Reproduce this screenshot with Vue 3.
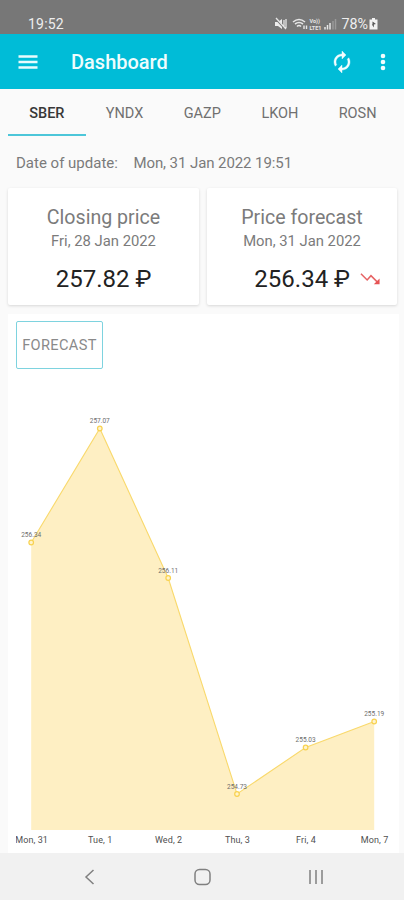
<script setup>
const tabs = ['SBER', 'YNDX', 'GAZP', 'LKOH', 'ROSN']
const points = [
  { x: 23.2, y: 227.5, value: '256.34', day: 'Mon, 31' },
  { x: 91.8, y: 113.5, value: '257.07', day: 'Tue, 1' },
  { x: 160.2, y: 263, value: '256.11', day: 'Wed, 2' },
  { x: 229, y: 479, value: '254.73', day: 'Thu, 3' },
  { x: 297.6, y: 432.5, value: '255.03', day: 'Fri, 4' },
  { x: 366.2, y: 406.5, value: '255.19', day: 'Mon, 7' },
]
const line = points.map((p) => `${p.x},${p.y}`).join(' ')
const area = `23.2,515 ${line} 366.2,515`
</script>

<template>
  <div class="screen">
    <div class="status">
      <span class="time">19:52</span>
      <svg class="sicons" width="66" height="14" viewBox="0 0 66 14" fill="none" stroke="#e6e6e6">
        <path d="M1 5H4L8 2V12L4 9H1Z" fill="#ececec" stroke="none" />
        <path d="M1 1L11 12" stroke="#777" stroke-width="1.8" />
        <path d="M2 1L12 12M10 3V10M12 2V11" stroke-width="1.3" />
        <path d="M19 5Q25 0 31 5M21 7Q25 4 29 7M23 9.5Q25 7.5 27 9.5" stroke-width="1.6" />
        <path d="M30 8.5V12M32.5 8.5V12" stroke-width="1.4" />
        <text x="35.5" y="6" class="lte">Vo))</text>
        <text x="35.5" y="12.8" class="lte">LTE1</text>
        <path d="M51 10V12.5M53.5 8V12.5M56 6V12.5" stroke-width="1.5" />
        <path d="M59 4V12.5M61.5 2V12.5" stroke="#999" stroke-width="1.5" />
      </svg>
      <span class="pct">78%</span>
      <svg class="battery" width="9" height="12" viewBox="0 0 9 12">
        <path d="M3 0H6V1.5H8.5V11.5H.5V1.5H3Z" fill="#f2f2f2" />
        <path d="M3.5 3.5L7 6L4.8 6.5L5 9.5L2.8 6.5H3.5Z" fill="#555" />
      </svg>
    </div>
    <header class="bar">
      <svg class="menu" width="20" height="14" viewBox="0 0 20 14">
        <path d="M.5 1.5H19.5M.5 7H19.5M.5 12.5H19.5" stroke="#e9fbfd" stroke-width="2.5" />
      </svg>
      <h1>Dashboard</h1>
      <svg class="sync" width="24" height="24" viewBox="0 0 24 24" fill="#f2fdfe" stroke="#f2fdfe" stroke-width=".4">
        <path d="M12 6v3l4-4-4-4v3c-4.42 0-8 3.58-8 8 0 1.57.46 3.03 1.24 4.26L6.7 14.8c-.45-.83-.7-1.79-.7-2.8 0-3.31 2.69-6 6-6zm6.76 1.74L17.3 9.2c.44.84.7 1.79.7 2.8 0 3.31-2.69 6-6 6v-3l-4 4 4 4v-3c4.42 0 8-3.58 8-8 0-1.57-.46-3.03-1.24-4.26z" />
      </svg>
      <svg class="more" width="6" height="18" viewBox="0 0 6 18" fill="#f2fdfe">
        <circle cx="3" cy="3" r="2.3" /><circle cx="3" cy="9" r="2.3" /><circle cx="3" cy="15" r="2.3" />
      </svg>
    </header>
    <nav class="tabs">
      <div v-for="(t, i) in tabs" :key="t" class="tab" :class="{ active: i === 0 }">{{ t }}</div>
    </nav>
    <div class="updated"><span>Date of update:</span><span class="stamp">Mon, 31 Jan 2022 19:51</span></div>
    <div class="cards">
      <section class="card">
        <h2>Closing price</h2>
        <p>Fri, 28 Jan 2022</p>
        <div class="price">257.82 ₽</div>
      </section>
      <section class="card">
        <h2>Price forecast</h2>
        <p>Mon, 31 Jan 2022</p>
        <div class="price with-trend">
          256.34 ₽
          <svg class="trend" width="21" height="14" viewBox="0 0 22 14">
            <path d="M1 1.5L7.5 8L11.5 3.5L18 10" fill="none" stroke="#e66364" stroke-width="1.6" />
            <path d="M20.5 6.5V12.5H14.5Z" fill="#e65354" />
          </svg>
        </div>
      </section>
    </div>
    <main class="panel">
      <button class="forecast">FORECAST</button>
      <svg class="chart" width="391" height="539" viewBox="0 -1 391 539">
        <defs><clipPath id="plot"><rect x="8" y="0" width="383" height="538" /></clipPath></defs>
        <polygon :points="area" fill="#feefc3" />
        <polyline :points="line" fill="none" stroke="#f9d96c" stroke-width="1.1" />
        <g clip-path="url(#plot)">
          <template v-for="p in points" :key="p.day">
            <circle :cx="p.x" :cy="p.y" r="2.3" fill="#fff3cd" stroke="#f8d250" stroke-width="1.2" />
            <text :x="p.x" :y="p.y - 5.5" class="value">{{ p.value }}</text>
            <text :x="p.x + 0.4" y="528" class="day">{{ p.day }}</text>
          </template>
        </g>
      </svg>
    </main>
    <footer class="nav">
      <svg width="404" height="47" viewBox="0 0 404 47" fill="none" stroke="#808080" stroke-width="1.5">
        <path d="M93.5 17L86 24L93.5 31" />
        <rect x="195" y="16.5" width="15" height="15" rx="4.5" />
        <path d="M310 17V31M316 17V31M322 17V31" />
      </svg>
    </footer>
  </div>
</template>

<style>
body { margin: 0; }
</style>

<style scoped>
.screen { width: 404px; height: 900px; overflow: hidden; display: flex; flex-direction: column; background: #fafafa; font-family: Roboto, "Liberation Sans", sans-serif; color: #7b7b7b; }
.status { height: 34px; flex: none; box-sizing: border-box; padding: 14px 26px 0 28px; display: flex; align-items: center; background: #777; color: #eee; font-size: 14px; line-height: 20px; }
.time { flex: 1; letter-spacing: .2px; }
.sicons { margin-right: 1px; }
.lte { font-size: 5.5px; font-weight: 700; fill: #e6e6e6; stroke: none; }
.pct { font-size: 14.3px; }
.battery { margin-left: 1px; }
.bar { height: 55px; flex: none; box-sizing: border-box; padding: 0 18px; display: flex; align-items: center; background: #00bcd7; }
h1 { flex: 1; margin: 0 0 0 33px; font-size: 20px; font-weight: 500; color: #effcfd; }
.more { margin-left: 26px; }
.tabs { height: 47px; flex: none; display: grid; grid-template-columns: repeat(5, 77.7px); padding-left: 8px; }
.tab { height: 47px; box-sizing: border-box; border-bottom: 2px solid transparent; text-align: center; font-size: 14.5px; line-height: 50px; color: #707070; }
.tab.active { border-color: #4cc6d9; color: #383838; font-weight: 500; }
.updated { height: 52px; flex: none; display: flex; gap: 15.5px; padding-left: 16px; font-size: 15px; line-height: 54px; }
.stamp { letter-spacing: -.08px; }
.cards { display: grid; grid-template-columns: 191px 190px; gap: 8px; padding-left: 8px; height: 117px; flex: none; }
.card { background: #fff; border-radius: 2px; box-shadow: 0 1px 3px rgba(0,0,0,.14); text-align: center; box-sizing: border-box; padding-top: 18px; }
h2 { margin: 0; font-size: 19.6px; line-height: 24px; font-weight: 400; }
p { margin: 0; font-size: 14.8px; line-height: 22px; }
.price { margin-top: 13px; height: 28px; display: flex; align-items: center; justify-content: center; font-size: 24px; line-height: 28px; color: #222; }
.with-trend { justify-content: flex-end; padding-right: 16px; }
.trend { margin-left: 10px; }
.panel { margin: 9px 5px 0 8px; height: 539px; flex: none; background: #fff; display: grid; }
.forecast { grid-area: 1 / 1; justify-self: start; margin: 7px 0 0 8px; width: 87px; height: 48px; padding: 0; box-sizing: border-box; border: 1.5px solid #7ed3df; border-radius: 2px; background: #fff; font: 14.6px Roboto, sans-serif; line-height: 20px; letter-spacing: .35px; color: #8a8a8a; z-index: 1; }
.chart { grid-area: 1 / 1; display: block; }
.value { font-size: 6.5px; fill: #6d6d6d; text-anchor: middle; }
.day { font-size: 9px; fill: #505050; text-anchor: middle; letter-spacing: .1px; }
.nav { height: 47px; flex: none; background: #f1f1f1; }
.nav svg { display: block; }
</style>
